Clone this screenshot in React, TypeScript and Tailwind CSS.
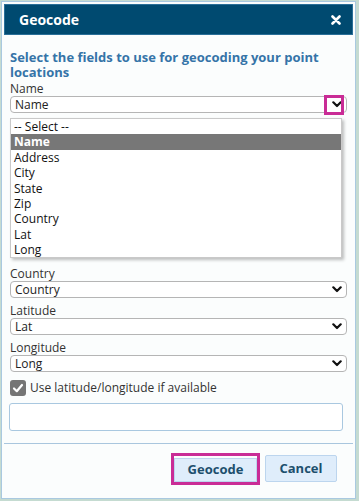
import React from "react";

const Chevron = () => (
  <svg width="10" height="7" viewBox="0 0 10 7" className="block">
    <path d="M1.3 1.3 L5 5 L8.7 1.3" fill="none" stroke="#111" strokeWidth="2.2" strokeLinecap="round" strokeLinejoin="round" />
  </svg>
);

function Field({ label, value, hidden }: { label: string; value: string; hidden?: boolean }) {
  return (
    <div className={"mb-[5px]" + (hidden ? " invisible" : "")}>
      <div className="h-[15px] leading-[15px] text-[12px] text-[#333]">{label}</div>
      <div className="h-[17px] rounded-[4px] border border-[#b5b5b5] bg-white flex items-center pl-[4px] pr-[4px] text-[12px] leading-[15px] text-[#222]">
        <span className="flex-1">{value}</span>
        <Chevron />
      </div>
    </div>
  );
}

const options = ["-- Select --", "Name", "Address", "City", "State", "Zip", "Country", "Lat", "Long"];

export default function App() {
  return (
    <div className="w-[359px] h-[501px] bg-[#c5dbd1] pt-[1px] pl-[1px]" style={{ fontFamily: '"Open Sans", "Liberation Sans", sans-serif' }}>
      <div className="w-[355px] h-[498px] border border-[#a9c9e0] bg-[#fbfdfd] p-[2px] flex flex-col relative">
        <div className="h-[31px] bg-[#004a70] border border-[#2a6f98] flex items-center justify-between pl-[14px] pr-[11px]">
          <span className="text-white font-bold text-[14px]">Geocode</span>
          <svg width="10" height="10" viewBox="0 0 10 10">
            <path d="M1.5 1.5 L8.5 8.5 M8.5 1.5 L1.5 8.5" stroke="white" strokeWidth="2.6" strokeLinecap="round" />
          </svg>
        </div>
        <div className="px-[6px] pt-[15px] relative">
          <div className="text-[13px] font-bold leading-[15px] text-[#3574a8] mb-[1px]">
            Select the fields to use for geocoding your point locations
          </div>
          <div className="relative">
            <Field label="Name" value="Name" />
            <div className="absolute left-[314px] top-[14px] w-[20px] h-[20px] border-[3px] border-[#c92c96]" />
          </div>
          <Field label="Address" value="Address" hidden />
          <Field label="City" value="City" hidden />
          <Field label="State" value="State" hidden />
          <Field label="Zip" value="Zip" hidden />
          <Field label="Country" value="Country" />
          <Field label="Latitude" value="Lat" />
          <Field label="Longitude" value="Long" />
          <div className="flex items-center gap-[4px] h-[21px]">
            <div className="w-[16px] h-[16px] rounded-[3px] bg-[#757575] flex items-center justify-center">
              <svg width="12" height="12" viewBox="0 0 12 12">
                <path d="M2 6.5 L4.8 9.2 L10 3" fill="none" stroke="white" strokeWidth="2.2" strokeLinecap="round" strokeLinejoin="round" />
              </svg>
            </div>
            <span className="text-[12px] text-[#333] leading-[15px]">Use latitude/longitude if available</span>
          </div>
          <div className="mt-[5px] h-[28px] w-[334px] -ml-[1px] rounded-[3px] border border-[#a9c8e0] bg-white" />

          <div className="absolute left-[6px] top-[83px] w-[332px] h-[140px] bg-white border border-[#c9c9c9] shadow-[2px_2px_3px_rgba(0,0,0,0.25)]">
            {options.map((o, i) => (
              <div
                key={o}
                className={
                  "h-[15.4px] leading-[15.4px] pl-[3px] text-[12px] " +
                  (i === 1 ? "bg-[#777777] text-white font-bold" : "text-[#111]")
                }
              >
                {o}
              </div>
            ))}
          </div>
        </div>
        <div className="mt-[12px] border-t border-[#a9c6de]" />
        <div className="flex justify-end gap-[5px] pr-[16px] pt-[9px]">
          <div className="border-[3px] border-[#c92c96]">
            <button className="w-[83px] h-[24px] bg-[#dfedfb] border border-[#bcd5ee] text-[13px] font-bold text-[#1d4f6d]">Geocode</button>
          </div>
          <button className="mt-[2px] w-[72px] h-[27px] rounded-[2px] bg-[#dfedfb] border border-[#bcd5ee] text-[13px] font-bold text-[#1d4f6d]">Cancel</button>
        </div>
      </div>
    </div>
  );
}
